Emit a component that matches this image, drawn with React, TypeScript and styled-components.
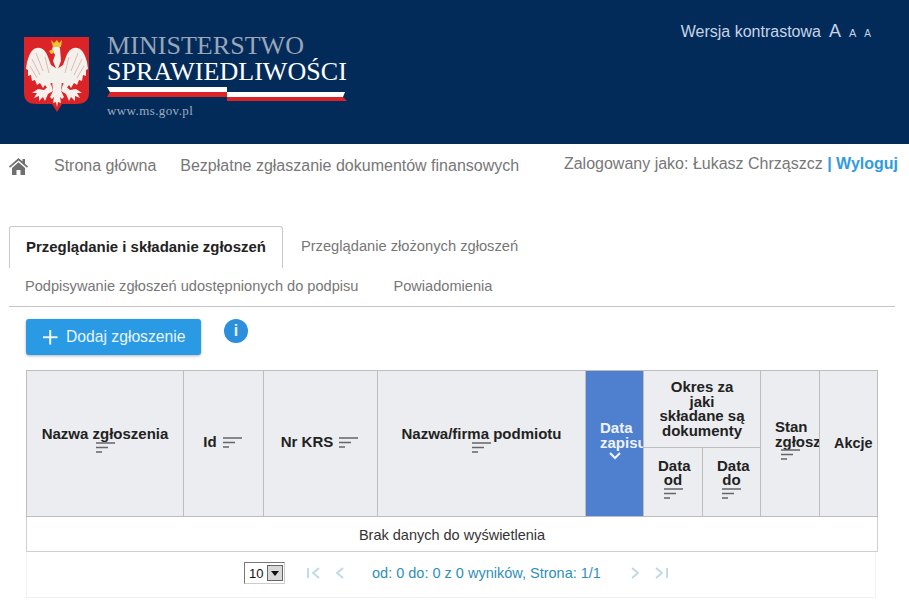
import { createGlobalStyle, styled } from 'styled-components';

const GlobalStyle = createGlobalStyle`
  html, body {
    margin: 0;
    padding: 0;
    background: #fff;
    font-family: "Liberation Sans", Arial, sans-serif;
    overflow: hidden;
  }
`;

const Page = styled.div`
  width: 909px;
  height: 614px;
  overflow: hidden;
`;

const Header = styled.header`
  display: flex;
  justify-content: space-between;
  height: 144px;
  background: #032b5a;
`;

const Logo = styled.div`
  display: flex;
  gap: 17px;
  padding: 31px 0 0 24px;
`;

const LogoText = styled.div`
  display: flex;
  flex-direction: column;
  padding-top: 1px;
  font-family: "Liberation Serif", "Times New Roman", serif;
  font-size: 26px;
  line-height: 27px;
`;

const LogoGrey = styled.span`
  color: #9aa6b8;
  letter-spacing: 0.05px;
`;

const LogoWhite = styled.span`
  margin-top: -1px;
  color: #fff;
  letter-spacing: 0.05px;
`;

const LogoUrl = styled.span`
  color: #9fabbd;
  font-size: 13px;
  line-height: 15px;
  letter-spacing: 0.4px;
`;

const Contrast = styled.div`
  display: flex;
  align-items: baseline;
  gap: 8px;
  height: 20px;
  padding: 21px 38px 0 0;
  color: #c6d4e6;
  font-size: 16px;
`;

const FontSize = styled.span<{ $size: number }>`
  font-size: ${(p) => p.$size}px;
`;

const Nav = styled.nav`
  display: flex;
  align-items: flex-start;
  height: 82px;
  padding: 11px 11px 0 9px;
  box-sizing: border-box;
  color: #777;
  font-size: 16px;
  line-height: 22px;
`;

const HomeLink = styled.span`
  display: flex;
  margin: 3px 26px 0 0;
`;

const NavLink = styled.span`
  margin: 0 24px 0 0;
`;

const User = styled.span`
  margin-left: auto;
  margin-top: -2px;
`;

const Logout = styled.b`
  color: #2f9be0;
`;

const Tabs = styled.div`
  display: flex;
  flex-wrap: wrap;
  width: 886px;
  height: 81px;
  margin-left: 9px;
  box-sizing: border-box;
  border-bottom: 1px solid #c4c4c4;
`;

const Tab = styled.div<{ $active?: boolean }>`
  height: 42px;
  padding: ${(p) => (p.$active ? '11px 16px 0' : '10px 17px 0')};
  box-sizing: border-box;
  border: 1px solid ${(p) => (p.$active ? '#c8c8c8' : 'transparent')};
  border-bottom: 0;
  border-radius: 3px 3px 0 0;
  color: ${(p) => (p.$active ? '#222' : '#777')};
  font-size: ${(p) => (p.$active ? 14.95 : 14.7)}px;
  font-weight: ${(p) => (p.$active ? 700 : 400)};
  line-height: 18px;
`;

const SecondTabRow = styled.div`
  display: flex;
  flex-basis: 100%;
  height: 38px;
  padding: 9px 0 0 16px;
  box-sizing: border-box;
  gap: 35px;
  color: #777;
  font-size: 14.6px;
  line-height: 18px;
`;

const Toolbar = styled.div`
  display: flex;
  align-items: flex-start;
  gap: 23px;
  margin: 12px 0 15px 26px;
`;

const AddButton = styled.button`
  display: flex;
  align-items: center;
  gap: 8px;
  width: 175px;
  height: 36px;
  padding: 0 0 0 16px;
  border: 0;
  border-radius: 3px;
  background: #2b9ae4;
  box-shadow: 0 1px 3px rgba(0, 0, 0, 0.3);
  color: #e9f5fd;
  font-family: inherit;
  font-size: 15.7px;
`;

const InfoBadge = styled.span`
  display: flex;
  align-items: center;
  justify-content: center;
  width: 24px;
  height: 24px;
  border-radius: 50%;
  background: #2b8fdc;
  color: #e5f3fc;
  font-size: 16px;
  font-weight: 700;
`;

const Table = styled.table`
  width: 851px;
  margin-left: 26px;
  table-layout: fixed;
  border-collapse: collapse;
`;

const HeadCell = styled.th<{ $active?: boolean }>`
  padding: 0;
  border: 1px solid #bdbdbd;
  background: ${(p) => (p.$active ? '#4f7fcf' : '#ebedf0')};
  color: ${(p) => (p.$active ? '#eef3fb' : '#222')};
  font-size: 15px;
  line-height: 14.5px;
  text-align: center;
  vertical-align: middle;
`;

const CellInner = styled.div<{ $inline?: boolean }>`
  display: ${(p) => (p.$inline ? 'flex' : 'block')};
  align-items: center;
  justify-content: center;
  gap: 6px;
  padding: ${(p) => (p.$inline ? '0 16px 2px 14px' : '0 14px 6px')};
  overflow: hidden;
`;

const ActionsInner = styled.div`
  padding-left: 14px;
  font-size: 14.4px;
  text-align: left;
  white-space: nowrap;
`;

const Title = styled.div`
  white-space: nowrap;
`;

const EmptyCell = styled.td`
  height: 33px;
  padding: 1px 0 0;
  border: 1px solid #d0d0d0;
  color: #333;
  font-size: 14.5px;
  text-align: center;
`;

const Pager = styled.div`
  display: flex;
  align-items: center;
  width: 850px;
  height: 46px;
  margin-left: 26px;
  padding-bottom: 3px;
  box-sizing: border-box;
  border: 1px solid #f1f1f1;
  border-top: 0;
  color: #2f8fb8;
  font-size: 14.5px;
`;

const PageSize = styled.div`
  display: flex;
  align-items: center;
  justify-content: space-between;
  width: 41px;
  height: 22px;
  margin: 0 21px 0 217px;
  padding: 0 1px 0 4px;
  box-sizing: border-box;
  border: 1px solid;
  border-color: #777 #ccc #ccc #777;
  color: #111;
  font-size: 13px;
`;

const PageSizeArrow = styled.span`
  display: flex;
  align-items: center;
  justify-content: center;
  width: 16px;
  height: 16px;
  box-sizing: border-box;
  border: 1px solid #666;
  background: #d8d8d8;
`;

const PagerButton = styled.span<{ $gap: number; $lead?: number }>`
  display: flex;
  margin-left: ${(p) => p.$lead ?? 0}px;
  margin-right: ${(p) => p.$gap}px;
`;

const EagleHalf = () => (
  <>
    <path
      d="M13 17C18 16 22 20 24 26L27 34L33 38V52H27L24 58L21 54L19 57L16 52L13 54L11 49L8 50L7 44L4 45L4 39L2 38L3 31L5 25C7 20 10 17 13 17Z"
      fill="#f4f1ec"
    />
    <path
      d="M27 53L20 59L14 58L8 62L13 62L10 67L15 65L15 70L19 66L21 70L24 63L29 60Z"
      fill="#f4f1ec"
    />
    <path d="M33 50H28L29 60L26 66L28 68L30 66L29 72L32 71L33 76Z" fill="#f4f1ec" />
    <path
      d="M12 22L19 40M8 28L16 44M6 35L13 47M21 26L25 42"
      stroke="#d9a9a5"
      strokeWidth="0.8"
      fill="none"
    />
  </>
);

const Eagle = () => (
  <svg width="66" height="82" viewBox="0 0 66 82">
    <path d="M0 6H65V62C65 70 60 73 52 73H38L33 81L28 73H13C5 73 0 70 0 62Z" fill="#dc2327" />
    <EagleHalf />
    <g transform="matrix(-1 0 0 1 66 0)">
      <EagleHalf />
    </g>
    <path d="M36 17C34 14 29 14 28 18L31 24L29 30L33 40L37 30Z" fill="#f4f1ec" />
    <path d="M27 9L30 12L33 9L35 12L38 9L37 16H29Z" fill="#f2c230" />
    <path d="M29 18L25 20L27 23L30 22Z" fill="#f2c230" />
  </svg>
);

const Ribbon = () => (
  <svg width="241" height="16" viewBox="0 0 241 16" style={{ display: 'block', marginTop: 2 }}>
    <path d="M0 0H120V5H3Z" fill="#fff" />
    <path d="M3 5H120V10H0Z" fill="#dc2327" />
    <path d="M120 5H238L236 10H120Z" fill="#fff" />
    <path d="M120 10H236L240 14H120Z" fill="#dc2327" />
  </svg>
);

const HomeIcon = () => (
  <svg width="19" height="17" viewBox="0 0 19 17">
    <path d="M9.5 0L0 8.5L1 9.7L9.5 2.5L18 9.7L19 8.5L16 5.8V1H13.5V3.6Z" fill="#6f6f6f" />
    <path d="M3 10L9.5 4.200L16 10V17H11.500V12H7.500V17H3Z" fill="#6f6f6f" />
  </svg>
);

const PlusIcon = () => (
  <svg width="16" height="16" viewBox="0 0 16 16">
    <path d="M7.200 1H9.200V7.200H15.500V9.200H9.200V15.500H7.200V9.200H1V7.200H7.200Z" fill="#eef7fd" />
  </svg>
);

const SortIcon = ({ centered }: { centered?: boolean }) => (
  <svg
    width="19"
    height="12"
    viewBox="0 0 19 12"
    style={{ display: centered ? 'block' : 'inline-block', margin: centered ? '0 auto' : 0, flex: 'none' }}
  >
    <path d="M0 1H19M0 5.500H12M0 10H6" stroke="#666" strokeWidth="1.500" />
  </svg>
);

const ChevronDown = () => (
  <svg width="14" height="9" viewBox="0 0 14 9" style={{ display: 'block', margin: '1px auto 0' }}>
    <path d="M2 2L7 7L12 2" fill="none" stroke="#eef3fb" strokeWidth="2.200" />
  </svg>
);

const PagerIcon = ({ d }: { d: string }) => (
  <svg width="16" height="16" viewBox="0 0 16 16">
    <path d={d} fill="none" stroke="#bcd9e4" strokeWidth="1.800" />
  </svg>
);

const columns = [157, 80, 114, 208, 58, 59, 58, 59, 58];

function App() {
  return (
    <Page>
      <GlobalStyle />
      <Header>
        <Logo>
          <Eagle />
          <LogoText>
            <LogoGrey>MINISTERSTWO</LogoGrey>
            <LogoWhite>SPRAWIEDLIWOŚCI</LogoWhite>
            <Ribbon />
            <LogoUrl>www.ms.gov.pl</LogoUrl>
          </LogoText>
        </Logo>
        <Contrast>
          <span>Wersja kontrastowa</span>
          <FontSize $size={18}>A</FontSize>
          <FontSize $size={11}>A</FontSize>
          <FontSize $size={10}>A</FontSize>
        </Contrast>
      </Header>

      <Nav>
        <HomeLink>
          <HomeIcon />
        </HomeLink>
        <NavLink>Strona główna</NavLink>
        <NavLink>Bezpłatne zgłaszanie dokumentów finansowych</NavLink>
        <User>
          Zalogowany jako: Łukasz Chrząszcz <Logout>| Wyloguj</Logout>
        </User>
      </Nav>

      <Tabs>
        <Tab $active>Przeglądanie i składanie zgłoszeń</Tab>
        <Tab>Przeglądanie złożonych zgłoszeń</Tab>
        <SecondTabRow>
          <span>Podpisywanie zgłoszeń udostępnionych do podpisu</span>
          <span>Powiadomienia</span>
        </SecondTabRow>
      </Tabs>

      <Toolbar>
        <AddButton>
          <PlusIcon />
          Dodaj zgłoszenie
        </AddButton>
        <InfoBadge>i</InfoBadge>
      </Toolbar>

      <Table>
        <colgroup>
          {columns.map((width, i) => (
            <col key={i} style={{ width }} />
          ))}
        </colgroup>
        <thead>
          <tr style={{ height: 77 }}>
            <HeadCell rowSpan={2}>
              <CellInner>
                <Title>Nazwa zgłoszenia</Title>
                <SortIcon centered />
              </CellInner>
            </HeadCell>
            <HeadCell rowSpan={2}>
              <CellInner $inline>
                Id <SortIcon />
              </CellInner>
            </HeadCell>
            <HeadCell rowSpan={2}>
              <CellInner $inline>
                <Title>Nr KRS</Title> <SortIcon />
              </CellInner>
            </HeadCell>
            <HeadCell rowSpan={2}>
              <CellInner>
                <Title>Nazwa/firma podmiotu</Title>
                <SortIcon centered />
              </CellInner>
            </HeadCell>
            <HeadCell rowSpan={2} $active>
              <CellInner>
                Data
                <br />
                zapisu
                <ChevronDown />
              </CellInner>
            </HeadCell>
            <HeadCell colSpan={2}>
              Okres za
              <br />
              jaki
              <br />
              składane są
              <br />
              dokumenty
            </HeadCell>
            <HeadCell rowSpan={2}>
              <CellInner>
                Stan
                <br />
                zgłoszenia
                <SortIcon centered />
              </CellInner>
            </HeadCell>
            <HeadCell rowSpan={2}>
              <ActionsInner>Akcje</ActionsInner>
            </HeadCell>
          </tr>
          <tr style={{ height: 69 }}>
            <HeadCell>
              <CellInner>
                Data
                <br />
                od
                <SortIcon centered />
              </CellInner>
            </HeadCell>
            <HeadCell>
              <CellInner>
                Data
                <br />
                do
                <SortIcon centered />
              </CellInner>
            </HeadCell>
          </tr>
        </thead>
        <tbody>
          <tr>
            <EmptyCell colSpan={9}>Brak danych do wyświetlenia</EmptyCell>
          </tr>
        </tbody>
      </Table>

      <Pager>
        <PageSize>
          10
          <PageSizeArrow>
            <svg width="8" height="5" viewBox="0 0 8 5">
              <path d="M0 0H8L4 5Z" fill="#111" />
            </svg>
          </PageSizeArrow>
        </PageSize>
        <PagerButton $gap={10}>
          <PagerIcon d="M2 3V13M13 3L7 8L13 13" />
        </PagerButton>
        <PagerButton $gap={24}>
          <PagerIcon d="M11 3L5 8L11 13" />
        </PagerButton>
        <span>od: 0 do: 0 z 0 wyników, Strona: 1/1</span>
        <PagerButton $gap={10} $lead={26}>
          <PagerIcon d="M5 3L11 8L5 13" />
        </PagerButton>
        <PagerButton $gap={0}>
          <PagerIcon d="M3 3L9 8L3 13M14 3V13" />
        </PagerButton>
      </Pager>
    </Page>
  );
}

export default App;
